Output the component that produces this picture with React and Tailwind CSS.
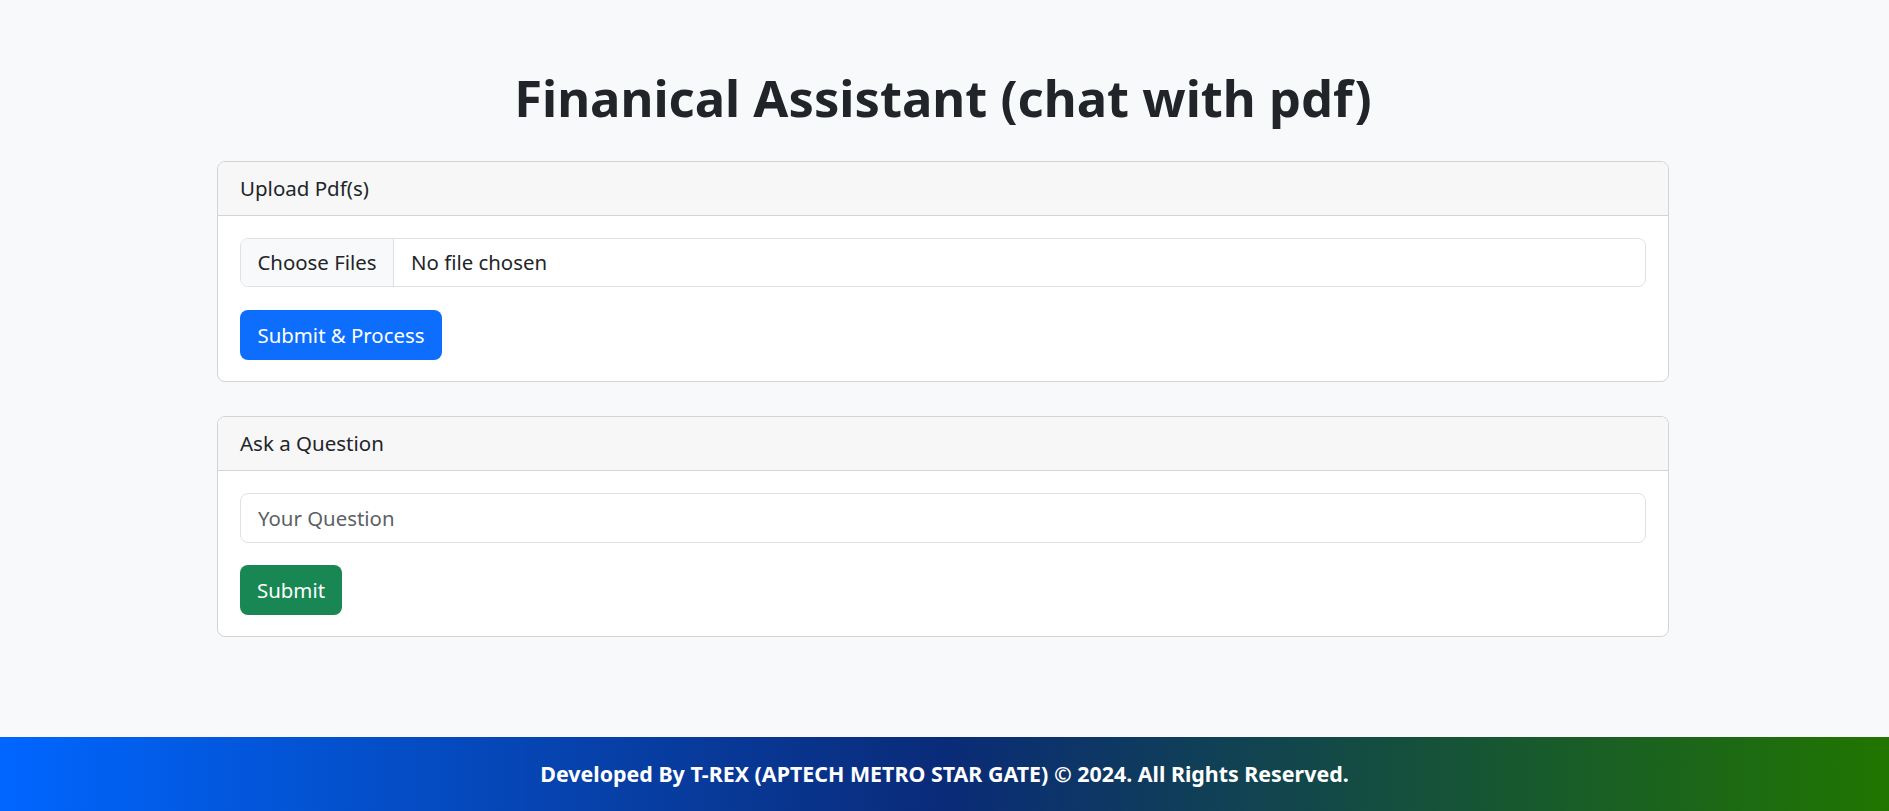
import React from "react";

const font = { fontFamily: '"Segoe UI", "Noto Sans", "Open Sans", Arial, sans-serif' };

function Card({ title, gap, children }) {
  return (
    <div className="rounded-[8px] border border-[#d3d4d5] bg-white overflow-hidden">
      <div className="flex h-[54px] items-center border-b border-[#d3d4d5] bg-[#f7f7f7] px-[22px] text-[20.5px] text-[#212529]">
        {title}
      </div>
      <div className={`px-[22px] pt-[22px] pb-[21px] flex flex-col ${gap}`}>{children}</div>
    </div>
  );
}

export default function App() {
  return (
    <div
      className="flex min-h-screen flex-col bg-[#f8f9fa] text-[#212529]"
      style={font}
    >
      <main className="flex-1 pt-[68px] pr-[3px]">
        <h1 className="mb-[33px] text-center text-[50.7px] font-bold leading-[60px] text-[#212529]">
          Finanical Assistant (chat with pdf)
        </h1>
        <div className="mx-auto flex w-[1452px] flex-col gap-[34px]">
          <Card title="Upload Pdf(s)" gap="gap-[23px]">
            <label className="flex h-[49px] w-full cursor-pointer items-stretch overflow-hidden rounded-[8px] border border-[#dee2e6] bg-white text-[20.4px]">
              <input type="file" multiple className="hidden" />
              <span className="flex w-[153px] items-center justify-center border-r border-[#dee2e6] bg-[#f8f9fa] text-[#212529]">
                Choose Files
              </span>
              <span className="flex items-center pl-[17px] text-[#212529]">No file chosen</span>
            </label>
            <div>
              <button className="h-[50px] w-[202px] rounded-[8px] bg-[#0d6efd] text-[20.4px] text-white">
                Submit &amp; Process
              </button>
            </div>
          </Card>
          <Card title="Ask a Question" gap="gap-[22px]">
            <input
              type="text"
              placeholder="Your Question"
              className="h-[50px] w-full rounded-[8px] border border-[#dee2e6] bg-white px-[17px] text-[20.4px] text-[#212529] outline-none placeholder:text-[#5d6166]"
            />
            <div>
              <button className="h-[50px] w-[102px] rounded-[8px] bg-[#198754] text-[20.4px] text-white">
                Submit
              </button>
            </div>
          </Card>
        </div>
      </main>
      <footer className="flex h-[74px] items-center justify-center bg-[linear-gradient(to_right,#0066ff,#0a2b78_50%,#207600)] text-[21.4px] font-bold text-white">
        Developed By T-REX (APTECH METRO STAR GATE) © 2024. All Rights Reserved.
      </footer>
    </div>
  );
}
